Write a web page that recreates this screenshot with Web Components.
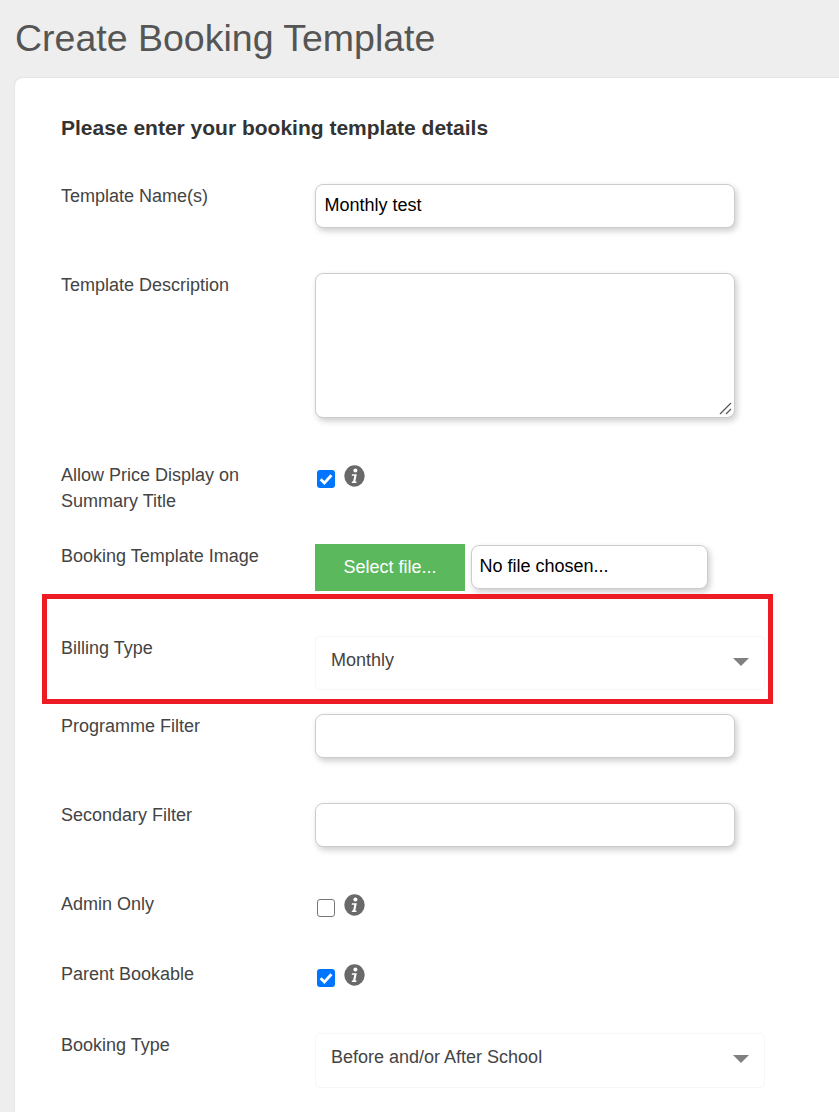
<!DOCTYPE html>
<html lang="en">
<head>
<meta charset="utf-8">
<title>Create Booking Template</title>
<style>
html, body { margin: 0; height: 1112px; overflow: hidden; background: #eee; }
body { font-family: "Liberation Sans", Arial, sans-serif; }
</style>
</head>
<body>
<booking-page>
  <span slot="title">Create Booking Template</span>
  <form-panel heading="Please enter your booking template details">
    <form-row gap="45"><span slot="label">Template Name(s)</span><text-box>Monthly test</text-box></form-row>
    <form-row gap="45"><span slot="label">Template Description</span><text-box multiline></text-box></form-row>
    <form-row gap="30"><span slot="label">Allow Price Display on<br>Summary Title</span><check-info checked></check-info></form-row>
    <form-row gap="45"><span slot="label">Booking Template Image</span><file-picker></file-picker></form-row>
    <form-row gap="24"><span slot="label">Billing Type</span><select-box tall>Monthly</select-box></form-row>
    <form-row gap="45"><span slot="label">Programme Filter</span><text-box></text-box></form-row>
    <form-row gap="45"><span slot="label">Secondary Filter</span><text-box></text-box></form-row>
    <form-row gap="44"><span slot="label">Admin Only</span><check-info></check-info></form-row>
    <form-row gap="45"><span slot="label">Parent Bookable</span><check-info checked></check-info></form-row>
    <form-row gap="0"><span slot="label">Booking Type</span><select-box>Before and/or After School</select-box></form-row>
  </form-panel>
  <call-out></call-out>
</booking-page>

<script>
// page shell: grey background, title, and the slot for the white panel
class BookingPage extends HTMLElement {
  constructor() {
    super();
    this.attachShadow({ mode: 'open' }).innerHTML = `
      <style>
        :host { display: block; position: relative; height: 1112px; overflow: hidden; }
        h1 { margin: 0; padding: 15px 0 0 15px; height: 62px; font: 400 37.5px/46px "Liberation Sans", Arial, sans-serif; color: #555; }
      </style>
      <h1><slot name="title"></slot></h1>
      <slot></slot>`;
  }
}

class FormPanel extends HTMLElement {
  constructor() {
    super();
    this.attachShadow({ mode: 'open' }).innerHTML = `
      <style>
        :host { display: block; margin: 0 -20px 0 15px; background: #fff; border-top: 1px solid #e4e4e4; border-radius: 8px 8px 0 0; padding: 38px 0 0 46px; height: 1100px; box-sizing: border-box; box-shadow: -1px 0 1px #e6e6e6; }
        h2 { margin: 0 0 44px; font: 700 21px/24px "Liberation Sans", Arial, sans-serif; color: #333; }
      </style>
      <h2></h2>
      <slot></slot>`;
    this.shadowRoot.querySelector('h2').textContent = this.getAttribute('heading');
  }
}

class FormRow extends HTMLElement {
  constructor() {
    super();
    this.attachShadow({ mode: 'open' }).innerHTML = `
      <style>
        :host { display: grid; grid-template-columns: 254px 1fr; align-items: start; }
        .label { margin-top: -1px; font: 400 18px/26px "Liberation Sans", Arial, sans-serif; color: #444; }
      </style>
      <div class="label"><slot name="label"></slot></div>
      <div><slot></slot></div>`;
    this.style.marginBottom = this.getAttribute('gap') + 'px';
  }
}

class TextBox extends HTMLElement {
  constructor() {
    super();
    this.attachShadow({ mode: 'open' }).innerHTML = `
      <style>
        :host { display: block; position: relative; width: 420px; height: 44px; box-sizing: border-box; padding: 0 8.5px; background: #fff; border: 1px solid #ccc; border-radius: 8px; box-shadow: 2px 3px 6px rgba(0,0,0,.2); font: 400 18px/40px "Liberation Sans", Arial, sans-serif; color: #000; }
        :host([multiline]) { height: 145px; }
        svg { display: none; position: absolute; right: 2px; bottom: 2px; }
        :host([multiline]) svg { display: block; }
      </style>
      <slot></slot>
      <svg width="13" height="13" viewBox="0 0 13 13" fill="none" stroke="#555" stroke-width="1.2">
        <path d="M1 12 12 1M7 12 12 7"/>
      </svg>`;
  }
}

class InfoIcon extends HTMLElement {
  constructor() {
    super();
    this.attachShadow({ mode: 'open' }).innerHTML = `
      <style>:host { display: block; width: 21px; height: 22px; } svg { display: block; }</style>
      <svg width="21" height="22" viewBox="0 0 21 22">
        <ellipse cx="10.5" cy="11" rx="10.2" ry="10.7" fill="#696969"/>
        <circle cx="11.4" cy="5.5" r="2" fill="#fff"/>
        <path d="M8 9.2h4.8l-1.5 7.3h1.3l-.3 1.5H7.7l.3-1.5h1.1l1.2-5.8H7.7z" fill="#fff"/>
      </svg>`;
  }
}

class CheckInfo extends HTMLElement {
  constructor() {
    super();
    const on = this.hasAttribute('checked');
    this.attachShadow({ mode: 'open' }).innerHTML = `
      <style>
        :host { display: flex; align-items: flex-start; height: 26px; padding-left: 2px; }
        .box { width: 18px; height: 18px; margin: 7px 9px 0 0; box-sizing: border-box; border-radius: 3px; background: #fff; border: 1.5px solid #767676; }
        .box.on { background: #0075ff; border: 0; }
        svg { display: block; }
        info-icon { margin-top: 2px; }
      </style>
      <div class="box ${on ? 'on' : ''}">${on ? `<svg width="18" height="18" viewBox="0 0 18 18" fill="none" stroke="#fff" stroke-width="2.8"><path d="M3.6 9.2 7.4 13 14.4 5.2"/></svg>` : ''}</div>
      <info-icon></info-icon>`;
  }
}

class FilePicker extends HTMLElement {
  constructor() {
    super();
    this.attachShadow({ mode: 'open' }).innerHTML = `
      <style>
        :host { display: flex; align-items: flex-start; gap: 6px; font: 400 18px "Liberation Sans", Arial, sans-serif; }
        .btn { width: 150px; height: 47px; background: #5cb85c; color: #fff; display: flex; align-items: center; justify-content: center; }
        .name { width: 237px; height: 44px; margin-top: 1px; box-sizing: border-box; padding: 0 7.5px; border: 1px solid #ccc; border-radius: 8px; box-shadow: 2px 3px 6px rgba(0,0,0,.2); line-height: 40px; color: #000; background: #fff; }
      </style>
      <div class="btn">Select file...</div>
      <div class="name">No file chosen...</div>`;
  }
}

class SelectBox extends HTMLElement {
  constructor() {
    super();
    this.attachShadow({ mode: 'open' }).innerHTML = `
      <style>
        :host { display: flex; justify-content: space-between; width: 450px; height: 55px; box-sizing: border-box; padding: 11px 15px 0 15px; background: #fff; border: 1px solid #f7f7f7; border-radius: 4px; font: 400 18px/24px "Liberation Sans", Arial, sans-serif; color: #444; }
        :host([tall]) { height: 54px; }
        svg { display: block; margin-top: 10px; }
      </style>
      <slot></slot>
      <svg width="16" height="8" viewBox="0 0 16 8"><path d="M0 0h16L8 8z" fill="#808080"/></svg>`;
  }
}

// red annotation drawn over the screenshot
class CallOut extends HTMLElement {
  constructor() {
    super();
    this.attachShadow({ mode: 'open' }).innerHTML = `
      <style>:host { position: absolute; left: 42px; top: 594px; width: 731px; height: 110px; box-sizing: border-box; border: 5px solid #ed1c24; }</style>`;
  }
}

customElements.define('booking-page', BookingPage);
customElements.define('form-panel', FormPanel);
customElements.define('form-row', FormRow);
customElements.define('text-box', TextBox);
customElements.define('info-icon', InfoIcon);
customElements.define('check-info', CheckInfo);
customElements.define('file-picker', FilePicker);
customElements.define('select-box', SelectBox);
customElements.define('call-out', CallOut);
</script>
</body>
</html>
